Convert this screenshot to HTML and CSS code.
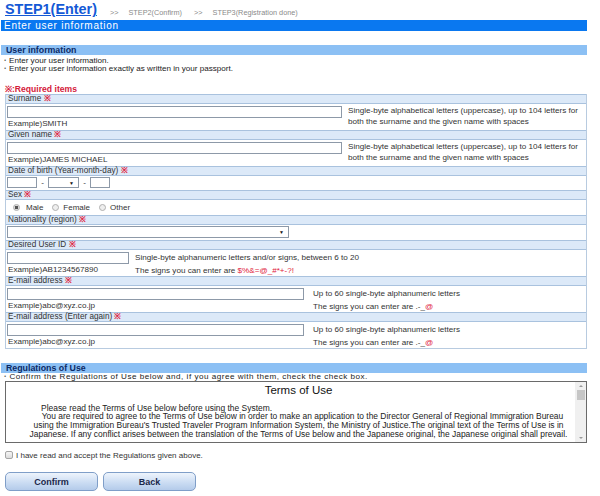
FILE: index.html
```html
<!DOCTYPE html>
<html>
<head>
<meta charset="utf-8">
<link rel="stylesheet" href="styles.css">
</head>
<body>
<div class="page">
  <div class="steps">
    <span class="step-current">STEP1(Enter)</span>
    <span class="step-other step-sep">&gt;&gt;</span>
    <span class="step-other">STEP2(Confirm)</span>
    <span class="step-other step-sep">&gt;&gt;</span>
    <span class="step-other">STEP3(Registration done)</span>
  </div>
  <div class="bar-main">Enter user information</div>

  <div class="bar-sub">User information</div>
  <div class="notes">
    <div>・Enter your user information.</div>
    <div>・Enter your user information exactly as written in your passport.</div>
  </div>
  <div class="required">※:Required items</div>

  <div class="form">
    <div class="row-head">Surname <span class="req">※</span></div>
    <div class="row-body grid">
      <div class="input w-name"></div>
      <div class="hint span2">Single-byte alphabetical letters (uppercase), up to 104 letters for<br>both the surname and the given name with spaces</div>
      <div class="example">Example)SMITH</div>
    </div>

    <div class="row-head">Given name <span class="req">※</span></div>
    <div class="row-body grid">
      <div class="input w-name"></div>
      <div class="hint span2">Single-byte alphabetical letters (uppercase), up to 104 letters for<br>both the surname and the given name with spaces</div>
      <div class="example">Example)JAMES MICHAEL</div>
    </div>

    <div class="row-head">Date of birth (Year-month-day) <span class="req">※</span></div>
    <div class="row-body dob">
      <div class="input w-year"></div>
      <span class="dash">-</span>
      <div class="select w-month"><span class="arrow">▼</span></div>
      <span class="dash">-</span>
      <div class="input w-day"></div>
    </div>

    <div class="row-head">Sex <span class="req">※</span></div>
    <div class="row-body sex">
      <span class="radio checked"></span><span class="radio-label first">Male</span>
      <span class="radio"></span><span class="radio-label">Female</span>
      <span class="radio"></span><span class="radio-label">Other</span>
    </div>

    <div class="row-head">Nationality (region) <span class="req">※</span></div>
    <div class="row-body nat">
      <div class="select w-nat"><span class="arrow">▼</span></div>
    </div>

    <div class="row-head">Desired User ID <span class="req">※</span></div>
    <div class="row-body grid grid-id">
      <div class="input w-id"></div>
      <div class="hint">Single-byte alphanumeric letters and/or signs, between 6 to 20</div>
      <div class="example">Example)AB1234567890</div>
      <div class="hint">The signs you can enter are <span class="signs">$%&amp;=@_#*+-?!</span></div>
    </div>

    <div class="row-head">E-mail address <span class="req">※</span></div>
    <div class="row-body grid grid-mail">
      <div class="input w-mail"></div>
      <div class="hint">Up to 60 single-byte alphanumeric letters</div>
      <div class="example">Example)abc@xyz.co.jp</div>
      <div class="hint">The signs you can enter are .-_<span class="signs">@</span></div>
    </div>

    <div class="row-head">E-mail address (Enter again) <span class="req">※</span></div>
    <div class="row-body grid grid-mail">
      <div class="input w-mail"></div>
      <div class="hint">Up to 60 single-byte alphanumeric letters</div>
      <div class="example">Example)abc@xyz.co.jp</div>
      <div class="hint">The signs you can enter are .-_<span class="signs">@</span></div>
    </div>
  </div>

  <div class="bar-sub bar-reg">Regulations of Use</div>
  <div class="notes notes-reg">
    <div>・Confirm the Regulations of Use below and, if you agree with them, check the check box.</div>
  </div>

  <div class="terms">
    <div class="terms-text">
      <div class="terms-title">Terms of Use</div>
      <div class="terms-p1">Please read the Terms of Use below before using the System.</div>
      <div class="terms-p2"><span class="indent"></span>You are required to agree to the Terms of Use below in order to make an application to the Director General of Regional Immigration Bureau<br>using the Immigration Bureau's Trusted Traveler Program Information System, the Ministry of Justice.The original text of the Terms of Use is in<br>Japanese. If any conflict arises between the translation of the Terms of Use below and the Japanese original, the Japanese original shall prevail.</div>
    </div>
    <div class="scrollbar">
      <span class="sb-up"></span>
      <span class="sb-thumb"></span>
      <span class="sb-space"></span>
      <span class="sb-down"></span>
    </div>
  </div>

  <div class="agree">
    <span class="checkbox"></span><span>I have read and accept the Regulations given above.</span>
  </div>

  <div class="buttons">
    <div class="btn">Confirm</div>
    <div class="btn">Back</div>
  </div>
</div>
</body>
</html>
```

FILE: styles.css
```css
* { box-sizing: border-box; }
html, body { margin: 0; padding: 0; background: #fff; }
body {
  font-family: "Liberation Sans", Arial, sans-serif;
  font-size: 8px;
  color: #333;
  width: 600px;
  height: 496px;
  overflow: hidden;
}
.page {
  width: 587px;
  padding-left: 1px;
}
.steps {
  height: 20px;
  display: flex;
  align-items: flex-end;
  padding-left: 4px;
  padding-bottom: 3px;
}
.step-current {
  font-size: 14.4px;
  font-weight: bold;
  color: #1459d6;
  text-decoration: underline;
  line-height: 15px;
  margin-right: 13px;
}
.step-other {
  font-size: 7.3px;
  color: #8a8a8a;
  margin-right: 12px;
  line-height: 9px;
}
.step-sep { margin-right: 10px; }
.bar-main {
  background: #0a78f0;
  color: #fff;
  font-size: 10px;
  height: 11px;
  line-height: 11px;
  padding-left: 3px;
  letter-spacing: 0.75px;
}
.bar-sub {
  margin-top: 14px;
  background: #8cc0f4;
  color: #0b2a66;
  font-weight: bold;
  font-size: 8.8px;
  height: 10px;
  line-height: 10px;
  padding-left: 5px;
}
.notes {
  padding-top: 1.5px;
  line-height: 8.5px;
  font-size: 8.1px;
  color: #222;
}
.notes-reg { padding-top: 0; line-height: 8px; letter-spacing: 0.5px; }
.required {
  margin-top: 11px;
  color: #d4203a;
  font-weight: bold;
  font-size: 8.6px;
  line-height: 9px;
  padding-left: 4px;
}
.req { color: #e0203a; font-weight: bold; }
.form {
  margin-left: 4px;
  border-left: 1px solid #b8cbe0;
  border-right: 1px solid #b8cbe0;
  border-bottom: 1px solid #b8cbe0;
}
.row-head {
  background: #dce9f8;
  border-top: 1px solid #a9c2de;
  border-bottom: 1px solid #a9c2de;
  height: 10px;
  line-height: 8px;
  padding-left: 2px;
  font-size: 8.2px;
  color: #333;
}
.row-body {
  background: #fff;
  padding: 2px 1px 1px 1px;
  font-size: 8.1px;
}
.grid {
  display: grid;
  grid-template-columns: 335px 1fr;
  grid-template-rows: 12px 1fr;
  column-gap: 6px;
  row-gap: 1px;
  height: 26px;
}
.grid-id { grid-template-columns: 122px 1fr; }
.grid-mail { grid-template-columns: 297px 1fr; column-gap: 9px; }
.span2 { grid-row: span 2; line-height: 11px; margin-top: -1px; }
.input {
  height: 12px;
  border: 1px solid #8d99a8;
  background: #fff;
}
.hint { line-height: 11px; white-space: nowrap; color: #333; }
.grid-id .hint, .grid-mail .hint { line-height: 12px; }
.example { line-height: 9px; padding-left: 1px; color: #333; }
.signs { color: #e0203a; }
.dob {
  display: flex;
  align-items: center;
  height: 14px;
  padding: 1px 1px;
}
.w-year { width: 30px; height: 11px; }
.w-day { width: 20px; height: 11px; }
.dash { width: 11px; text-align: center; }
.select {
  border: 1px solid #8d99a8;
  background: #fff;
  height: 11px;
  display: flex;
  justify-content: flex-end;
  align-items: center;
  padding-right: 4px;
}
.w-month { width: 31px; }
.w-nat { width: 282px; height: 12px; }
.arrow { font-size: 5px; color: #111; }
.sex {
  display: flex;
  align-items: center;
  height: 15px;
  padding: 1px 0 0 7px;
}
.radio {
  width: 7px;
  height: 7px;
  border-radius: 50%;
  border: 1px solid #b0b0b0;
  background: #eee;
  margin-right: 4px;
}
.radio.checked {
  background: radial-gradient(circle, #555 0 1.5px, #ddd 2px);
}
.radio-label { margin-right: 9px; font-size: 8px; }
.radio-label.first { margin-left: 2px; }
.nat { height: 15px; padding-top: 1px; }
.bar-reg { margin-top: 14.5px; }
.terms {
  margin-left: 4px;
  height: 62px;
  border: 1px solid #6a6a6a;
  display: flex;
}
.terms-text { flex: 1; color: #222; }
.terms-title {
  text-align: center;
  font-size: 11.5px;
  line-height: 13px;
  padding-top: 2px;
  padding-left: 16px;
  color: #111;
}
.terms-p1 {
  margin-top: 6.5px;
  padding-left: 35px;
  font-size: 8.45px;
  line-height: 8.7px;
}
.terms-p2 {
  text-align: center;
  font-size: 8.45px;
  line-height: 8.7px;
  white-space: nowrap;
  padding-left: 16px;
}
.indent { display: inline-block; width: 8px; }
.scrollbar {
  width: 11px;
  background: #f0f0f0;
  display: flex;
  flex-direction: column;
  align-items: center;
  padding: 3px 0;
}
.sb-up {
  width: 0; height: 0;
  border-left: 2px solid transparent;
  border-right: 2px solid transparent;
  border-bottom: 2px solid #999;
}
.sb-thumb {
  width: 8px;
  height: 10px;
  background: #c6c6c6;
  margin-top: 3px;
}
.sb-space { flex: 1; }
.sb-down {
  width: 0; height: 0;
  border-left: 2px solid transparent;
  border-right: 2px solid transparent;
  border-top: 2px solid #999;
}
.agree {
  display: flex;
  align-items: center;
  margin-top: 7px;
  padding-left: 4px;
  font-size: 8px;
  color: #333;
  height: 10px;
}
.checkbox {
  width: 8px;
  height: 8px;
  border: 1px solid #a5a5a5;
  border-radius: 2px;
  background: linear-gradient(#f6f6f6, #dcdcdc);
  margin-right: 3px;
}
.buttons {
  display: flex;
  gap: 5px;
  margin-top: 12px;
  padding-left: 4px;
}
.btn {
  width: 93px;
  height: 19px;
  border: 1px solid #7f9ec8;
  border-radius: 5px;
  background: linear-gradient(#eef4fc, #c9dbf2 60%, #b4cbea);
  color: #1a2748;
  font-weight: bold;
  font-size: 9px;
  display: flex;
  align-items: center;
  justify-content: center;
}
```
